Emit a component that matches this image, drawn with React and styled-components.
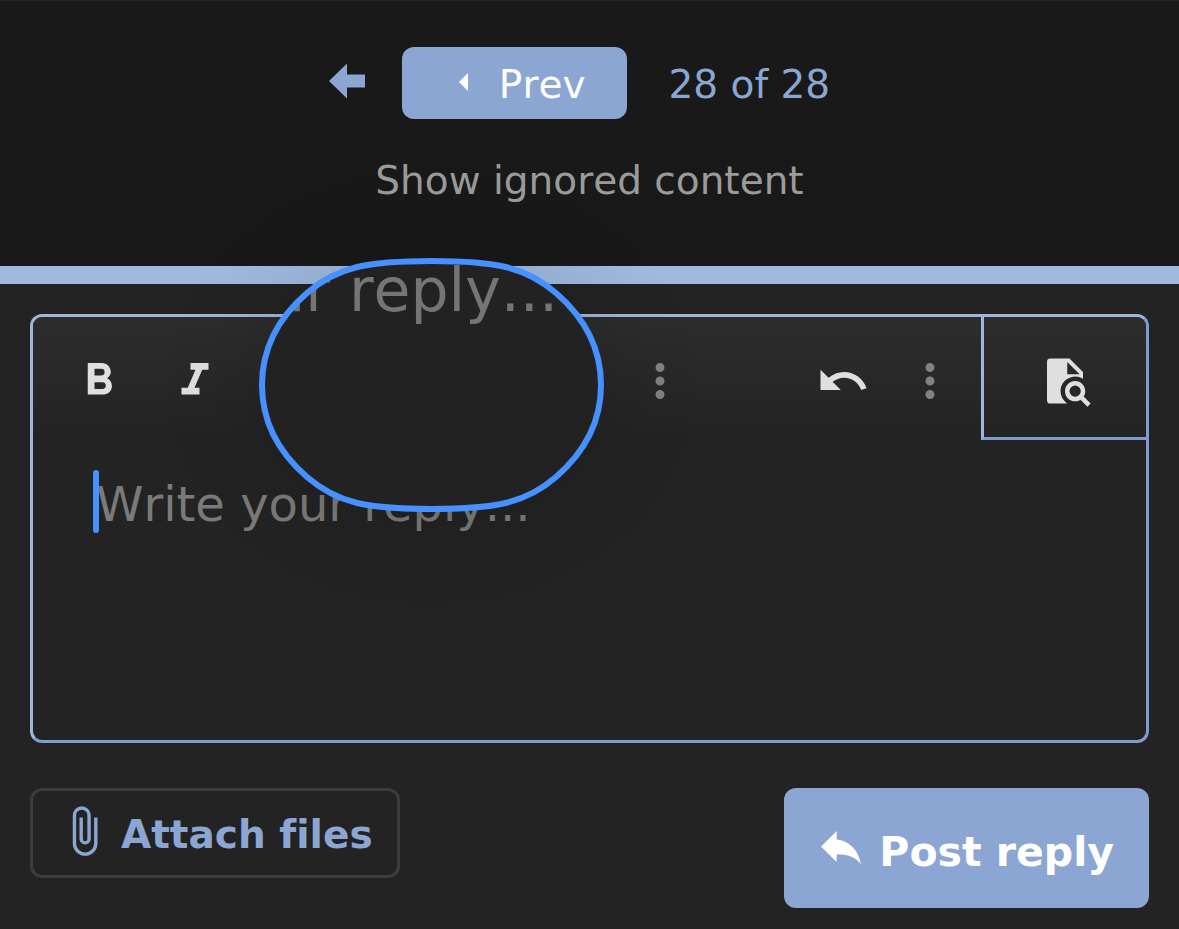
import React from "react";
import styled, { createGlobalStyle } from "styled-components";

const Global = createGlobalStyle`
  *, *::before, *::after { box-sizing: border-box; }
  body { margin: 0; background: #232323; }
  body, button, textarea {
    font-family: Verdana, "DejaVu Sans", sans-serif;
    font-kerning: none;
    font-variant-ligatures: none;
  }
`;

const Page = styled.div`
  min-height: 100vh;
  background: #232323;
  overflow-x: hidden;
`;

const ThreadFooter = styled.header`
  display: flex;
  flex-direction: column;
  align-items: center;
  padding: 46px 30px 61px;
  background: #191919;
  border-top: 1px solid #242424;
`;

const PageNav = styled.nav`
  display: flex;
  align-items: center;
  padding-right: 20px;
`;

const FirstLink = styled.a`
  display: flex;
  padding-bottom: 4px;
  margin-right: 37px;
  color: #8ca6d3;
`;

const PrevLink = styled.a`
  display: flex;
  align-items: center;
  height: 72px;
  padding: 0 41px 2px 57px;
  gap: 30px;
  border-radius: 12px;
  background: #8ca6d3;
  color: #fff;
  font-size: 39px;
  line-height: 48px;
  text-decoration: none;
`;

const PageCount = styled.span`
  padding: 4px 0 0 42px;
  color: #8ca6d3;
  font-size: 39px;
  line-height: 48px;
`;

const IgnoredLink = styled.a`
  margin-top: 38px;
  color: #9b9b9b;
  font-size: 39px;
  line-height: 48px;
  text-decoration: none;
`;

const Divider = styled.div`
  height: 18px;
  background: #9fb9df;
`;

const ReplyForm = styled.form`
  padding: 30px 30px 20px;
`;

const Editor = styled.div`
  position: relative;
  border: 3px solid;
  border-color: #9fb5dd #7f9bd1 #7f9bd1 #9fb5dd;
  border-radius: 12px;
`;

const Toolbar = styled.div`
  display: flex;
  height: 123px;
  padding-left: 18px;
  border-radius: 9px 9px 0 0;
  background: linear-gradient(#2d2d2d, #232323);
`;

const ToolGroup = styled.div`
  display: flex;
  padding-bottom: 3px;
  margin-left: ${(p) => p.$offset || "0"};
  margin-right: ${(p) => p.$end || "0"};
`;

const ToolButton = styled.button`
  display: flex;
  align-items: center;
  justify-content: center;
  width: ${(p) => (p.$narrow ? "78px" : "96px")};
  padding: 7px 0 0;
  border: 0;
  background: none;
  color: ${(p) => (p.$muted ? "#828282" : "#dfdfdf")};
`;

const PreviewButton = styled(ToolButton)`
  width: 165px;
  border: 0 solid #7f9bd1;
  border-width: 0 0 3px 3px;
  border-left-color: #9fb5dd;
`;

const Field = styled.div`
  position: relative;
  display: flex;
`;

const Message = styled.textarea`
  width: 100%;
  height: 300px;
  padding: 34px 60px 30px 63px;
  border: 0;
  outline: 0;
  resize: none;
  background: transparent;
  color: #dfdfdf;
  font-size: 48px;
  line-height: 60px;
  &::placeholder { color: #7a7a7a; opacity: 1; }
`;

const Caret = styled.span`
  position: absolute;
  left: 60px;
  top: 30px;
  width: 6px;
  height: 63px;
  border-radius: 3px;
  background: #4690ff;
`;

const Loupe = styled.div`
  position: absolute;
  left: 226px;
  top: -59px;
  width: 345px;
  height: 254px;
  border-radius: 50%;
  box-shadow: 0 0 90px 16px rgba(0, 0, 0, 0.12);
  pointer-events: none;
`;

const LENS =
  "M172.500 3C108 3 78 9 48 35C18 61 3 92 3 127C3 162 18 193 48 219C78 245 108 251 172.500 251C237 251 267 245 297 219C327 193 342 162 342 127C342 92 327 61 297 35C267 9 237 3 172.500 3Z";

const LoupeView = styled.div`
  display: flex;
  justify-content: flex-end;
  height: 254px;
  padding-right: 46px;
  clip-path: path("${LENS}");
  background: #222;
  color: #757575;
  font-size: 60px;
  line-height: 64px;
  white-space: nowrap;
`;

const LoupeRim = styled.svg`
  position: absolute;
  inset: 0;
  overflow: visible;
`;

const Actions = styled.div`
  display: flex;
  align-items: flex-start;
  justify-content: space-between;
  margin-top: 45px;
`;

const AttachButton = styled.button`
  display: flex;
  align-items: center;
  height: 90px;
  padding: 0 24px 4px 24px;
  gap: 10px;
  border: 3px solid #3c3c3c;
  border-radius: 12px;
  background: transparent;
  color: #8ca6d3;
  font-size: 39px;
  font-weight: 700;
  line-height: 48px;
`;

const ButtonText = styled.span`
  padding-top: ${(p) => p.$drop || "0"};
`;

const PostButton = styled.button`
  display: flex;
  align-items: center;
  height: 120px;
  padding: 0 35px 0 37px;
  gap: 16px;
  border: 0;
  border-radius: 12px;
  background: #8ca6d3;
  color: #fff;
  font-size: 41px;
  font-weight: 700;
  line-height: 54px;
`;

const icons = {
  bold: "M13.5 15.5H10V12.5H13.5A1.5 1.5 0 0 1 15 14A1.5 1.5 0 0 1 13.5 15.5M10 6.5H13A1.5 1.5 0 0 1 14.5 8A1.5 1.5 0 0 1 13 9.5H10M15.600 10.790C16.570 10.110 17.250 9 17.250 8C17.250 5.740 15.500 4 13.250 4H7V18H14.040C16.140 18 17.750 16.300 17.750 14.210C17.750 12.690 16.890 11.390 15.600 10.790Z",
  italic: "M10 4V7H12.210L8.790 15H6V18H14V15H11.790L15.210 7H18V4H10Z",
  more: "M12 16A2 2 0 1 1 12 20A2 2 0 0 1 12 16M12 10A2 2 0 1 1 12 14A2 2 0 0 1 12 10M12 4A2 2 0 1 1 12 8A2 2 0 0 1 12 4Z",
  undo: "M12.500 8C9.850 8 7.450 9 5.600 10.600L2 7V16H11L7.380 12.380C8.770 11.220 10.540 10.500 12.500 10.500C16.040 10.500 19.050 12.810 20.100 16L22.470 15.220C21.080 11.030 17.150 8 12.500 8Z",
  preview:
    "M5.500 2H14L20 8V11.020A6.500 6.500 0 0 0 13.040 22H5.500A1.500 1.500 0 0 1 4 20.500V3.500A1.500 1.500 0 0 1 5.500 2ZM13 3.500V9H18.500ZM16.500 12C19 12 21 14 21 16.500C21 17.380 20.750 18.210 20.310 18.900L23.390 22L22 23.390L18.880 20.320C18.190 20.750 17.370 21 16.500 21C14 21 12 19 12 16.500C12 14 14 12 16.500 12M16.500 14A2.500 2.500 0 0 0 14 16.500A2.500 2.500 0 0 0 16.500 19A2.500 2.500 0 0 0 19 16.500A2.500 2.500 0 0 0 16.500 14Z",
  clip: "M16.500 6V17.500A4 4 0 0 1 12.500 21.500A4 4 0 0 1 8.500 17.500V5A2.500 2.500 0 0 1 11 2.500A2.500 2.500 0 0 1 13.500 5V15.500A1 1 0 0 1 12.500 16.500A1 1 0 0 1 11.500 15.500V6H10V15.500A2.500 2.500 0 0 0 12.500 18A2.500 2.500 0 0 0 15 15.500V5A4 4 0 0 0 11 1A4 4 0 0 0 7 5V17.500A5.500 5.500 0 0 0 12.500 23A5.500 5.500 0 0 0 18 17.500V6H16.500Z",
};

function Icon({ name }) {
  return (
    <svg width="54" height="54" viewBox="0 0 24 24" fill="currentColor" aria-hidden="true">
      <path fillRule="evenodd" d={icons[name]} />
    </svg>
  );
}

export default function App() {
  return (
    <Page>
      <Global />
      <ThreadFooter>
        <PageNav aria-label="Pages">
          <FirstLink href="#first" aria-label="First page">
            <svg width="36" height="36" viewBox="0 0 36 36" fill="currentColor" aria-hidden="true">
              <path d="M0 18L18 .5V11.500H36V24.500H18V35.500Z" />
            </svg>
          </FirstLink>
          <PrevLink href="#prev">
            <svg width="10" height="18" viewBox="0 0 10 18" fill="currentColor" aria-hidden="true">
              <path d="M0 9L9 0V18Z" />
            </svg>
            <ButtonText $drop="6px">Prev</ButtonText>
          </PrevLink>
          <PageCount>28 of 28</PageCount>
        </PageNav>
        <IgnoredLink href="#ignored">Show ignored content</IgnoredLink>
      </ThreadFooter>
      <Divider />
      <ReplyForm onSubmit={(e) => e.preventDefault()}>
        <Editor>
          <Toolbar role="toolbar" aria-label="Formatting">
            <ToolGroup>
              <ToolButton type="button" aria-label="Bold"><Icon name="bold" /></ToolButton>
              <ToolButton type="button" aria-label="Italic"><Icon name="italic" /></ToolButton>
            </ToolGroup>
            <ToolGroup $offset="369px">
              <ToolButton type="button" aria-label="More options" $muted><Icon name="more" /></ToolButton>
            </ToolGroup>
            <ToolGroup $offset="auto" $end="12px">
              <ToolButton type="button" aria-label="Undo"><Icon name="undo" /></ToolButton>
              <ToolButton type="button" aria-label="More actions" $muted $narrow><Icon name="more" /></ToolButton>
            </ToolGroup>
            <PreviewButton type="button" aria-label="Preview"><Icon name="preview" /></PreviewButton>
          </Toolbar>
          <Field>
            <Message aria-label="Reply" placeholder="Write your reply..." />
            <Caret />
          </Field>
          <Loupe aria-hidden="true">
            <LoupeView>Write your reply...</LoupeView>
            <LoupeRim width="345" height="254" viewBox="0 0 345 254" fill="none">
              <path d={LENS} stroke="#4690ff" strokeWidth="6" />
            </LoupeRim>
          </Loupe>
        </Editor>
        <Actions>
          <AttachButton type="button">
            <Icon name="clip" />
            <ButtonText $drop="8px">Attach files</ButtonText>
          </AttachButton>
          <PostButton type="submit">
            <svg width="42" height="34" viewBox="0 0 42 34" fill="currentColor" aria-hidden="true">
              <path d="M0 15.500L15.700 0V8.500C28 10 37 18 40 33C34 26 27 23.300 15.700 23.300V31Z" />
            </svg>
            <ButtonText $drop="8px">Post reply</ButtonText>
          </PostButton>
        </Actions>
      </ReplyForm>
    </Page>
  );
}
